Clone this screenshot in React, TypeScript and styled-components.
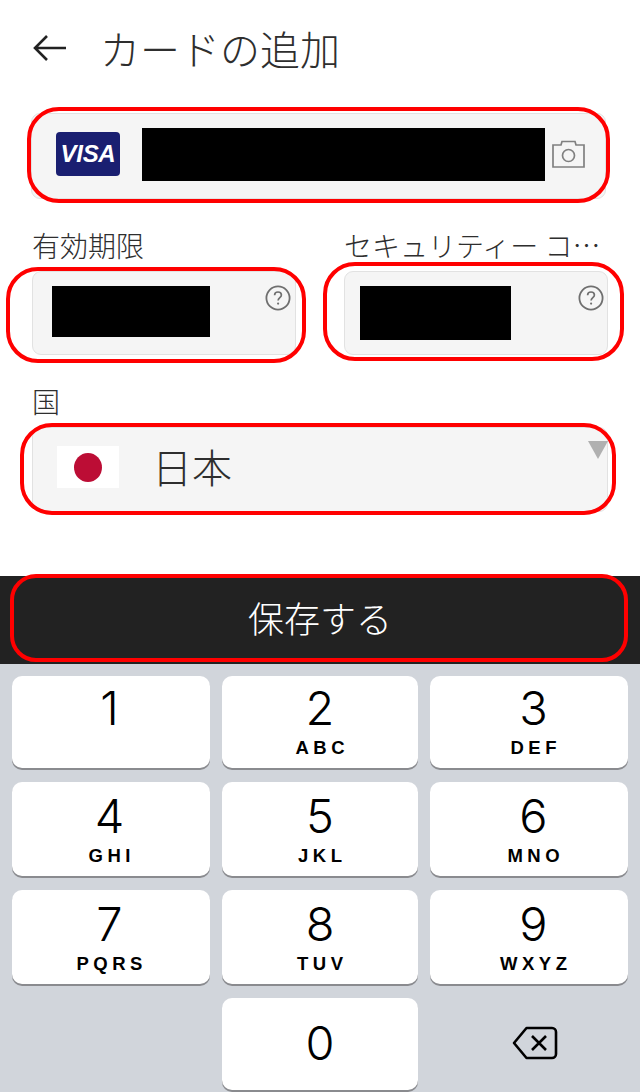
import styled, { createGlobalStyle } from 'styled-components';

const GlobalStyle = createGlobalStyle`
  html, body {
    margin: 0;
    padding: 0;
    background: #ffffff;
  }
  * {
    box-sizing: border-box;
  }
`;

const keys = [
  { digit: '1', letters: '' },
  { digit: '2', letters: 'ABC' },
  { digit: '3', letters: 'DEF' },
  { digit: '4', letters: 'GHI' },
  { digit: '5', letters: 'JKL' },
  { digit: '6', letters: 'MNO' },
  { digit: '7', letters: 'PQRS' },
  { digit: '8', letters: 'TUV' },
  { digit: '9', letters: 'WXYZ' },
];

function HelpIcon() {
  return (
    <HelpSvg viewBox="0 0 26 26" width="26" height="26">
      <circle cx="13" cy="13" r="11.6" fill="none" stroke="#6f6f6f" strokeWidth="1.8" />
      <path d="M9.6 10.2c0-2 1.5-3.2 3.4-3.2s3.4 1.2 3.4 3c0 2.6-3.3 2.7-3.3 5.6" fill="none" stroke="#6f6f6f" strokeWidth="1.7" />
      <circle cx="13.1" cy="18.6" r="1.1" fill="#6f6f6f" />
    </HelpSvg>
  );
}

function App() {
  return (
    <Page>
      <GlobalStyle />
      <Header>
        <svg viewBox="0 0 34 28" width="34" height="28">
          <path d="M33 14H2M14 2 2 14l12 12" fill="none" stroke="#222222" strokeWidth="2.6" />
        </svg>
        <Title>カードの追加</Title>
      </Header>

      <CardField>
        <Highlight $top={-7} $right={-5} $bottom={-5} $left={-5} />
        <VisaLogo>VISA</VisaLogo>
        <Redaction $width={403} $height={53} />
        <CameraSvg viewBox="0 0 33 28" width="33" height="28">
          <path d="M1 5h8l1-3.5h13l1 3.5h8v22H1z" fill="none" stroke="#808080" strokeWidth="1.7" />
          <circle cx="16.5" cy="15.5" r="6" fill="none" stroke="#808080" strokeWidth="1.7" />
        </CameraSvg>
      </CardField>

      <TwoColumns>
        <Column>
          <Label>有効期限</Label>
          <SmallField $inset={19} $end={4}>
            <Highlight $top={-5} $right={-11} $bottom={-9} $left={-27} />
            <Redaction $width={158} $height={51} />
            <HelpIcon />
          </SmallField>
        </Column>
        <Column>
          <Label>セキュリティー コ…</Label>
          <SmallField $inset={15} $end={3}>
            <Highlight $top={-10} $right={-17} $bottom={-7} $left={-22} />
            <Redaction $width={151} $height={54} />
            <HelpIcon />
          </SmallField>
        </Column>
      </TwoColumns>

      <CountrySection>
        <Label>国</Label>
        <CountryField>
          <Highlight $top={-5} $right={-9} $bottom={-4} $left={-13} />
          <Flag>
            <FlagDot />
          </Flag>
          <CountryName>日本</CountryName>
          <Caret />
        </CountryField>
      </CountrySection>

      <SaveBar>
        <Highlight $top={-2} $right={12} $bottom={2} $left={10} $radius={26} />
        保存する
      </SaveBar>

      <Keypad>
        {keys.map((key) => (
          <Key key={key.digit}>
            <Digit>{key.digit}</Digit>
            <Letters>{key.letters}</Letters>
          </Key>
        ))}
        <span />
        <Key>
          <Digit $solo>0</Digit>
        </Key>
        <Backspace>
          <svg viewBox="0 0 46 34" width="46" height="34">
            <path d="M14.5 2H40a4 4 0 0 1 4 4v22a4 4 0 0 1-4 4H14.5L2 17z" fill="none" stroke="#000000" strokeWidth="2.6" strokeLinejoin="round" />
            <path d="M20 10l14 14M34 10 20 24" fill="none" stroke="#000000" strokeWidth="2.6" />
          </svg>
        </Backspace>
      </Keypad>
    </Page>
  );
}

const Page = styled.div`
  width: 640px;
  height: 1092px;
  display: flex;
  flex-direction: column;
  overflow: hidden;
  font-family: "Noto Sans CJK JP", "Noto Sans", sans-serif;
  color: #2e2e2e;
`;

const Header = styled.header`
  height: 100px;
  padding: 0 0 5px 33px;
  display: flex;
  align-items: center;
  gap: 33px;
`;

const Title = styled.h1`
  margin: 0;
  font-size: 40px;
  font-weight: 300;
  line-height: 1;
  color: #2e2e2e;
`;

const Field = styled.div`
  position: relative;
  display: flex;
  background: #f5f5f5;
  border: 1px solid #e2e2e2;
  border-radius: 9px;
`;

const CardField = styled(Field)`
  width: 575px;
  height: 86px;
  margin: 13px 0 0 31px;
  padding: 0 0 4px 24px;
  align-items: center;
`;

const Highlight = styled.div<{ $top: number; $right: number; $bottom: number; $left: number; $radius?: number }>`
  position: absolute;
  top: ${(props) => props.$top}px;
  right: ${(props) => props.$right}px;
  bottom: ${(props) => props.$bottom}px;
  left: ${(props) => props.$left}px;
  border: 4px solid #ff0000;
  border-radius: ${(props) => props.$radius ?? 32}px;
  pointer-events: none;
`;

const VisaLogo = styled.div`
  width: 64px;
  height: 44px;
  margin-right: 22px;
  display: flex;
  align-items: center;
  justify-content: center;
  background: #1a1f71;
  border-radius: 4px;
  color: #ffffff;
  font-family: "Liberation Sans", Arial, sans-serif;
  font-size: 24px;
  font-style: italic;
  font-weight: 700;
  letter-spacing: -0.3px;
`;

const CameraSvg = styled.svg`
  margin-left: 7px;
`;

const Redaction = styled.div<{ $width: number; $height: number }>`
  width: ${(props) => props.$width}px;
  height: ${(props) => props.$height}px;
  flex: none;
  background: #000000;
`;

const TwoColumns = styled.div`
  margin: 25px 32px 0;
  display: grid;
  grid-template-columns: 264px 264px;
  column-gap: 48px;
`;

const Column = styled.div`
  display: flex;
  flex-direction: column;
`;

const Label = styled.label`
  display: block;
  height: 47px;
  font-size: 28px;
  font-weight: 300;
  line-height: 43px;
  white-space: nowrap;
  color: #2e2e2e;
`;

const SmallField = styled(Field)<{ $inset: number; $end: number }>`
  height: 84px;
  padding: 14px ${(props) => props.$end}px 0 ${(props) => props.$inset}px;
  justify-content: space-between;
  align-items: flex-start;
`;

const HelpSvg = styled.svg`
  margin-top: -1px;
`;

const CountrySection = styled.section`
  margin: 25px 32px 0;
`;

const CountryField = styled(Field)`
  height: 85px;
  padding: 0 0 5px 24px;
  align-items: center;
`;

const Flag = styled.div`
  width: 62px;
  height: 42px;
  margin-right: 33px;
  display: flex;
  align-items: center;
  justify-content: center;
  background: #ffffff;
`;

const FlagDot = styled.div`
  width: 28px;
  height: 29px;
  border-radius: 50%;
  background: #bc0d35;
`;

const CountryName = styled.span`
  margin-top: -3px;
  font-size: 40px;
  font-weight: 300;
  line-height: 1;
  color: #2e2e2e;
`;

const Caret = styled.div`
  position: absolute;
  top: 13px;
  right: -1px;
  width: 0;
  height: 0;
  border-left: 10px solid transparent;
  border-right: 10px solid transparent;
  border-top: 18px solid #b0b0b0;
`;

const SaveBar = styled.button`
  position: relative;
  height: 88px;
  margin-top: 64px;
  flex: none;
  border: 0;
  padding: 0 0 6px 0;
  background: #222222;
  color: #ffffff;
  font-family: inherit;
  font-size: 36px;
  font-weight: 300;
`;

const Keypad = styled.div`
  flex: 1;
  padding: 12px 12px 0;
  display: grid;
  grid-template-columns: 198px 196px 198px;
  grid-template-rows: 92px 94px 94px 92px;
  column-gap: 12px;
  row-gap: 14px;
  background: #d1d5db;
`;

const Key = styled.div`
  display: flex;
  flex-direction: column;
  align-items: center;
  background: #ffffff;
  border-radius: 10px;
  box-shadow: 0 2px 0 #8a8b8f;
  font-family: Inter, "Liberation Sans", sans-serif;
  color: #000000;

  &:nth-child(3n) {
    padding-left: 9px;
  }
  &:nth-child(3n + 1) {
    padding-right: 3px;
  }
  &:nth-child(n + 4) {
    padding-top: 2px;
  }
`;

const Digit = styled.div<{ $solo?: boolean }>`
  height: ${(props) => (props.$solo ? 90 : 60)}px;
  padding-top: ${(props) => (props.$solo ? 13 : 2)}px;
  font-size: 47px;
  font-weight: 300;
  line-height: 60px;
`;

const Letters = styled.div`
  margin: 1px -4.5px 0 0;
  font-family: "Liberation Sans", Arial, sans-serif;
  font-size: 18.5px;
  font-weight: 700;
  line-height: 22px;
  letter-spacing: 4.5px;
`;

const Backspace = styled.div`
  display: flex;
  align-items: center;
  justify-content: center;
  padding: 0 0 2px 12px;
`;

export default App;
